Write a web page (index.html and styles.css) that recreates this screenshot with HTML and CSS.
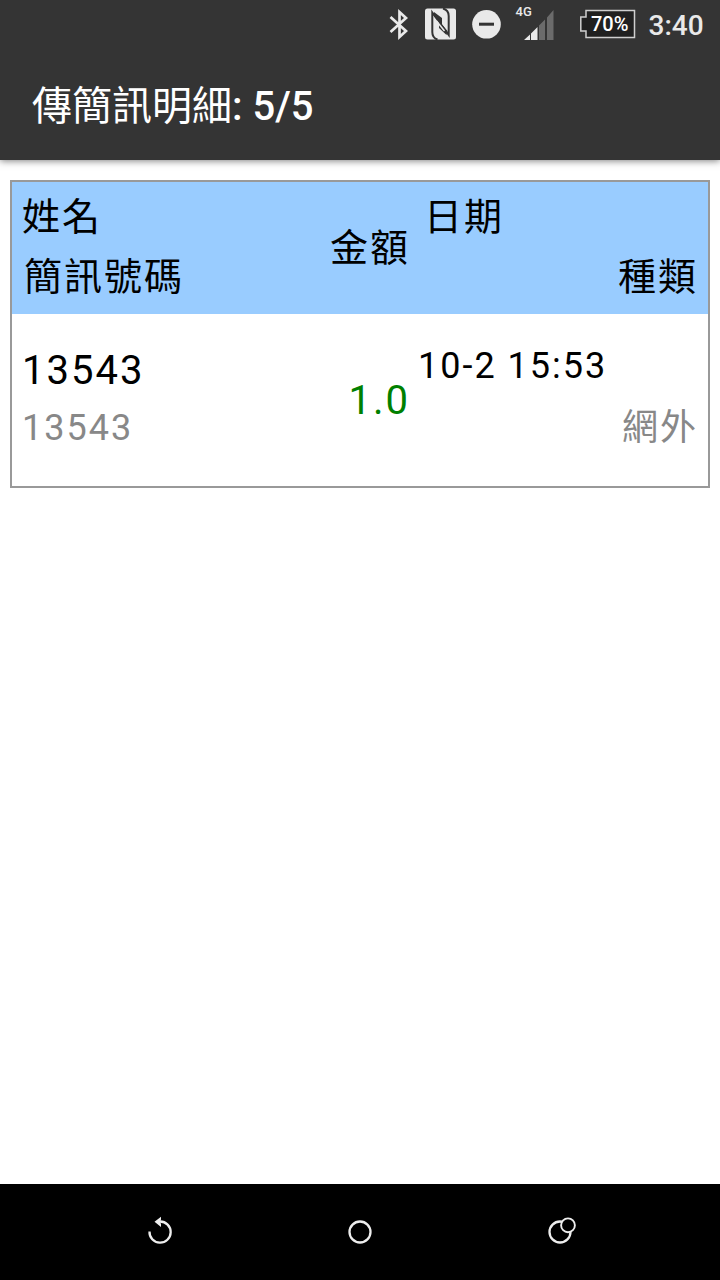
FILE: index.html
```
<!DOCTYPE html>
<html lang="zh-Hant">
<head>
<meta charset="utf-8">
<title>傳簡訊明細</title>
<link rel="stylesheet" href="styles.css">
</head>
<body>
<div class="screen">
  <header class="top">
    <div class="status">
      <svg class="status-icons" width="180" height="48" viewBox="380 0 180 48">
        <path d="M390.500 17L406 31L399.500 37V12L406 18L390.500 32" fill="none" stroke="#e9e9e9" stroke-width="2.700"/>
        <rect x="425" y="8.500" width="31" height="31" rx="2.500" fill="#e9e9e9"/>
        <path d="M437.500 39.500Q432.300 38 432.300 32V12.500L448.700 35V16Q448.700 10 443 8.500" fill="none" stroke="#333" stroke-width="2"/>
        <path d="M434 16.500L439 22V28L446.500 35L447.500 31L442 24.500V18L434 12Z" fill="#333"/>
        <path d="M436.500 21L444.500 31" stroke="#e9e9e9" stroke-width="1.500"/>
        <circle cx="486.500" cy="24.300" r="14.300" fill="#e9e9e9"/>
        <rect x="479" y="22.700" width="15" height="3" fill="#333"/>
        <text class="network" x="515.500" y="16">4G</text>
        <path d="M524 40L530 34.500V40ZM531 33.500L537.500 27V40H531Z" fill="#e9e9e9"/>
        <path d="M539 25.500L545 19.500V40H539ZM547 17.500L553.500 10V40H547Z" fill="#6b6b6b"/>
      </svg>
      <svg class="battery" width="56" height="48" viewBox="580 0 56 48">
        <path d="M586 10.500H634.500V37.500H586V31H580.800V17H586Z" fill="#202020" stroke="#cfcfcf" stroke-width="1.500"/>
        <text class="percent" x="591" y="31">70%</text>
      </svg>
      <span class="clock">3:40</span>
    </div>
    <h1 class="title">傳簡訊明細<span class="count">: 5/5</span></h1>
  </header>
  <main class="content">
    <section class="table">
      <div class="row head">
        <div class="who"><span>姓名</span><span class="number">簡訊號碼</span></div>
        <div class="amount">金額</div>
        <div class="when"><span class="date">日期</span><span class="kind">種類</span></div>
      </div>
      <div class="row record">
        <div class="who"><span>13543</span><span class="muted">13543</span></div>
        <div class="amount">1.0</div>
        <div class="when"><span>10-2 15:53</span><span class="kind muted">網外</span></div>
      </div>
    </section>
  </main>
  <nav class="nav">
    <svg width="60" height="60" viewBox="130 1200 60 60"><path d="M149.500 1231.500A10.600 10.600 0 1 0 160 1221.500" fill="none" stroke="#eee" stroke-width="2.300"/><path d="M154.500 1221.700L161 1216.700V1219.500L160 1221.700L161 1223.900V1227Z" fill="#eee"/></svg>
    <svg width="60" height="60" viewBox="330 1200 60 60"><circle cx="360" cy="1232" r="10.500" fill="none" stroke="#eee" stroke-width="2.300"/></svg>
    <svg width="60" height="60" viewBox="530 1200 60 60"><circle cx="560" cy="1232" r="10.500" fill="none" stroke="#eee" stroke-width="2.300"/><circle cx="568" cy="1225.300" r="6.900" fill="#000" stroke="#eee" stroke-width="1.900"/></svg>
  </nav>
</div>
</body>
</html>
```
FILE: styles.css
```
body {
  margin: 0;
  font-family: Roboto, "Noto Sans CJK TC", sans-serif;
}
.screen {
  display: flex;
  flex-direction: column;
  width: 720px;
  height: 1280px;
  background: #fff;
}
.top {
  height: 160px;
  background: #343434;
  box-shadow: 0 1px 7px rgba(0, 0, 0, .5);
}
.status {
  display: flex;
  height: 48px;
  padding-left: 380px;
}
.battery { margin-left: 20px; }
.network {
  font: 500 13px Roboto, sans-serif;
  fill: #e9e9e9;
}
.percent {
  font: 500 20px Roboto, sans-serif;
  fill: #fff;
}
.clock {
  margin-left: 12.5px;
  font-size: 28px;
  font-weight: 500;
  line-height: 51px;
  color: #e9e9e9;
}
.title {
  margin: 0;
  padding: 3px 32px 0;
  font-size: 40px;
  font-weight: 400;
  line-height: 112px;
  color: #fff;
}
.count { font-weight: 500; }
.content {
  flex: 1;
  padding: 20px 10px;
}
.table {
  border: 2px solid #999;
}
.row {
  display: grid;
  grid-template-columns: 300px 88px 288px;
  padding: 0 10px;
  letter-spacing: 2px;
  white-space: nowrap;
}
.who, .when {
  display: flex;
  flex-direction: column;
}
.when { margin-left: 8px; }
.amount {
  align-self: center;
  text-align: right;
}
.kind { align-self: flex-end; }
.head {
  height: 127px;
  padding-top: 5px;
  background: #9cf;
  font-size: 38px;
  line-height: 60px;
}
.head .amount { padding-bottom: 5px; }
.number { padding-left: 2px; }
.date { padding-left: 6px; }
.record {
  height: 172px;
  font-size: 40px;
  line-height: 58px;
}
.record .who { padding-top: 28px; }
.record .when {
  padding-top: 22px;
  font-size: 36px;
  line-height: 60px;
}
.record .amount {
  padding-top: 2px;
  color: #008000;
}
.record .muted {
  font-size: 36px;
  color: #888;
}
.record .who .muted { line-height: 57px; }
.record .kind { padding-top: 2px; }
.nav {
  display: flex;
  justify-content: center;
  align-items: center;
  gap: 140px;
  height: 92px;
  padding-bottom: 4px;
  background: #000;
}
```
